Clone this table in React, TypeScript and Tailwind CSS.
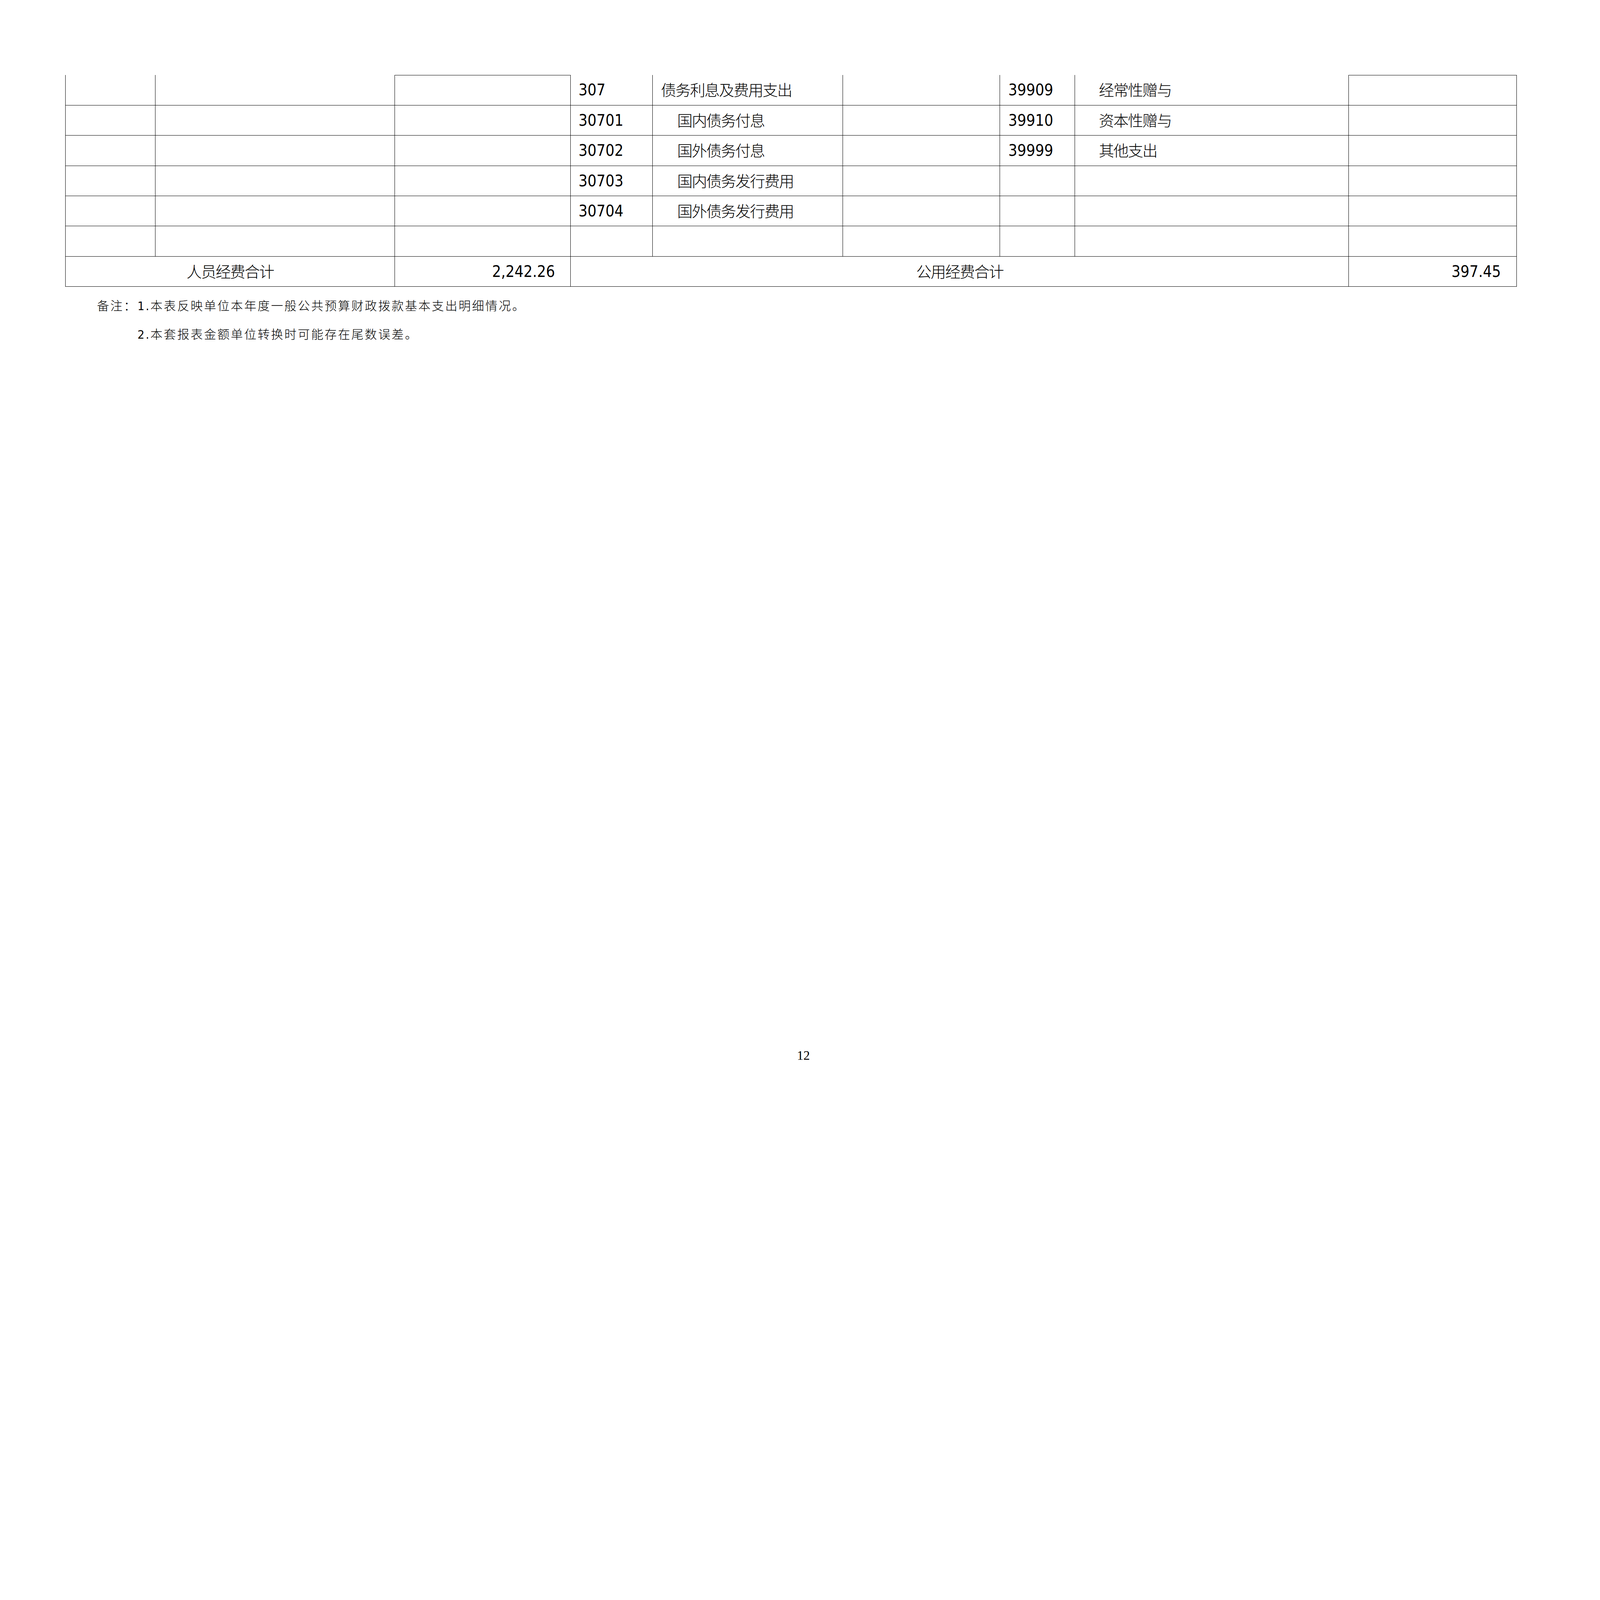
const rows: [string, string, boolean, string, string][] = [
  ["307", "债务利息及费用支出", false, "39909", "经常性赠与"],
  ["30701", "国内债务付息", true, "39910", "资本性赠与"],
  ["30702", "国外债务付息", true, "39999", "其他支出"],
  ["30703", "国内债务发行费用", true, "", ""],
  ["30704", "国外债务发行费用", true, "", ""],
  ["", "", false, "", ""],
];

const cell = "border-x-[1.5px] border-b-[1.5px] border-black p-0 align-middle";
const num =
  "font-['DejaVu_Sans_Condensed','DejaVu_Sans',sans-serif] font-stretch-condensed text-[40.2px] leading-none text-black";
const zh = "font-['Noto_Sans_CJK_SC',sans-serif] font-light text-[39.2px] tracking-[-2px] leading-none text-black";

function DetailRow({ row, first }: { row: [string, string, boolean, string, string]; first: boolean }) {
  const [code, name, sub, code2, name2] = row;
  const top = first ? "border-t-[1.5px]" : "border-t-0";
  return (
    <tr className="h-[77.4px]">
      <td className={`${cell} border-t-0`} />
      <td className={`${cell} border-t-0`} />
      <td className={`${cell} ${top}`} />
      <td className={`${cell} border-t-0 pl-[19.6px]`}>
        <span className={num}>{code}</span>
      </td>
      <td className={`${cell} border-t-0 ${sub ? "pl-[62.4px]" : "pl-[20.6px]"}`}>
        <span className={zh}>{name}</span>
      </td>
      <td className={`${cell} border-t-0`} />
      <td className={`${cell} border-t-0 pl-[21.7px]`}>
        <span className={num}>{code2}</span>
      </td>
      <td className={`${cell} border-t-0 pl-[60.9px]`}>
        <span className={zh}>{name2}</span>
      </td>
      <td className={`${cell} ${top}`} />
    </tr>
  );
}

export default function App() {
  return (
    <main className="w-full h-[2897px] bg-white flex flex-col overflow-hidden">
      <table className="border-collapse table-fixed w-[3714.7px] ml-[167.2px] mt-[191.5px]">
        <colgroup>
          <col className="w-[229.7px]" />
          <col className="w-[613.1px]" />
          <col className="w-[450.5px]" />
          <col className="w-[210px]" />
          <col className="w-[486.7px]" />
          <col className="w-[401.5px]" />
          <col className="w-[192.5px]" />
          <col className="w-[701.3px]" />
          <col className="w-[429.4px]" />
        </colgroup>
        <tbody>
          {rows.map((r, i) => (
            <DetailRow key={i} row={r} first={i === 0} />
          ))}
          <tr className="h-[77.4px]">
            <td colSpan={2} className={`${cell} text-center`}>
              <span className={zh}>人员经费合计</span>
            </td>
            <td className={`${cell} text-right pr-[39.7px]`}>
              <span className={num}>2,242.26</span>
            </td>
            <td colSpan={5} className={`${cell} text-center`}>
              <span className={zh}>公用经费合计</span>
            </td>
            <td className={`${cell} text-right pr-[39.7px]`}>
              <span className={num}>397.45</span>
            </td>
          </tr>
        </tbody>
      </table>

      <div className="ml-[248.2px] mt-[12.4px] flex flex-col font-['DejaVu_Sans_Condensed','DejaVu_Sans','Noto_Sans_CJK_SC',sans-serif] font-light text-[31px] tracking-[3.3px] leading-[73.8px] text-black">
        <p className="flex">
          <span className="w-[103.7px]">备注：</span>
          <span>1.本表反映单位本年度一般公共预算财政拨款基本支出明细情况。</span>
        </p>
        <p className="pl-[103.7px]">2.本套报表金额单位转换时可能存在尾数误差。</p>
      </div>

      <div className="flex-1" />

      <footer className="flex justify-center pl-[17.5px] mb-[178px]">
        <span className="font-['Liberation_Serif',serif] text-[33px] leading-[33px] text-black">12</span>
      </footer>
    </main>
  );
}
